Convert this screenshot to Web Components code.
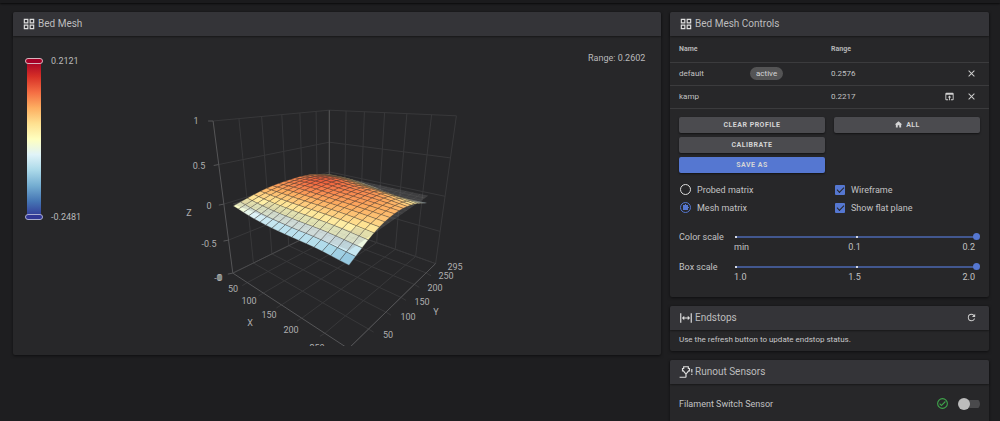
<!DOCTYPE html>
<html lang="en">
<head>
<meta charset="utf-8">
<meta name="viewport" content="width=device-width, initial-scale=1">
<title>Bed Mesh</title>
<style>
  html { background: #1e1e20; }
  body { margin: 0; background: #1e1e20; color: #c2c2c3; font-family: Roboto, "Liberation Sans", sans-serif; font-size: 9px; line-height: 12px; overflow: hidden; }
</style>
</head>
<body>
<tuning-page></tuning-page>
<script>
const ICONS = {
  grid: 'M3 3h8v8H3zM5 5v4h4V5zM13 3h8v8h-8zM15 5v4h4V5zM3 13h8v8H3zM5 15v4h4v-4zM13 13h8v8h-8zM15 15v4h4v-4z',
  expand: 'M9 11H15V8L19 12L15 16V13H9V16L5 12L9 8V11M2 20V4H4V20H2M20 20V4H22V20H20Z',
  nozzle: 'M7 2H17V5H19V11H17L13 16V20C13 21.1 12.1 22 11 22H1V20H11V16L7 11H5V5H7ZM9 4V7H7V9H8L12 14L16 9H17V7H15V4ZM21 7H23V13H21ZM21 15H23V17H21Z',
  refresh: 'M17.65 6.35C16.2 4.9 14.21 4 12 4A8 8 0 0 0 4 12A8 8 0 0 0 12 20C15.73 20 18.84 17.45 19.73 14H17.65C16.83 16.33 14.61 18 12 18A6 6 0 0 1 6 12A6 6 0 0 1 12 6C13.66 6 15.14 6.69 16.22 7.78L13 11H20V4Z',
  close: 'M19 6.41L17.59 5L12 10.59L6.41 5L5 6.41L10.59 12L5 17.59L6.41 19L12 13.41L17.59 19L19 17.59L13.41 12Z',
  load: 'M12 10L8 14H11V20H13V14H16ZM19 4H5C3.89 4 3 4.9 3 6V18A2 2 0 0 0 5 20H9V18H5V8H19V18H15V20H19A2 2 0 0 0 21 18V6A2 2 0 0 0 19 4Z',
  home: 'M10 20V14H14V20H19V12H22L12 3L2 12H5V20Z',
  ok: 'M12 2A10 10 0 1 0 22 12A10 10 0 0 0 12 2ZM12 20A8 8 0 1 1 20 12A8 8 0 0 1 12 20ZM16.6 7.6L10 14.2L7.4 11.6L6 13L10 17L18 9Z'
};

class Base extends HTMLElement {
  constructor() { super(); this.attachShadow({ mode: 'open' }); }
  connectedCallback() {
    this.shadowRoot.innerHTML = '<style>*{box-sizing:border-box}' + this.css() + '</style>' + this.html();
  }
  css() { return ''; }
  html() { return ''; }
}

customElements.define('md-icon', class extends Base {
  css() { return ':host{display:inline-flex;flex:none;width:14px;height:14px}svg{width:100%;height:100%;fill:currentColor}'; }
  html() { return `<svg viewBox="0 0 24 24" aria-hidden="true"><path fill-rule="evenodd" d="${ICONS[this.getAttribute('name')]}"/></svg>`; }
});

customElements.define('panel-card', class extends Base {
  css() { return `
    :host{display:block;background:#272729;border-radius:2px;box-shadow:0 1px 3px #0008}
    header{display:flex;align-items:center;gap:2px;height:24px;padding:0 9px;background:#343438;border-radius:2px 2px 0 0;box-shadow:0 1px 2px #0006}
    md-icon{color:#dedede}
    h2{margin:0;flex:1;font-size:10px;line-height:16px;font-weight:400;color:#bdbdbe}`; }
  html() { return `<header><md-icon name="${this.getAttribute('icon')}"></md-icon><h2>${this.getAttribute('heading')}</h2><slot name="action"></slot></header><slot></slot>`; }
});

customElements.define('icon-button', class extends Base {
  css() { return `:host{display:inline-flex}button{display:flex;align-items:center;justify-content:center;width:18px;height:18px;margin:0;padding:0;border:0;background:none;color:#d0d0d0}md-icon{width:11px;height:11px}`; }
  html() { return `<button type="button" aria-label="${this.getAttribute('label')}"><md-icon name="${this.getAttribute('name')}"></md-icon></button>`; }
});

customElements.define('flat-button', class extends Base {
  css() { return `
    :host{display:block}
    button{display:flex;align-items:center;justify-content:center;gap:3px;width:100%;height:16px;margin:0;padding:0;border:0;border-radius:2px;background:#4b4b4f;color:#d4d4d5;font:700 7px/16px Roboto,sans-serif;letter-spacing:.07em;text-transform:uppercase;box-shadow:0 1px 2px #0008}
    :host([primary]) button{background:#5577d1}`; }
  html() { return '<button type="button"><slot></slot></button>'; }
});

customElements.define('choice-input', class extends Base {
  css() { return `
    :host{display:block}
    label{display:flex;align-items:center;gap:6px;height:18px;padding-left:1px;font-size:9px;line-height:18px;color:#c2c2c3}
    input{appearance:none;flex:none;margin:0}
    input[type=radio]{width:11px;height:11px;border:1px solid #dedede;border-radius:50%}
    input[type=radio]:checked{border-color:#5577d1;background:radial-gradient(circle,#5577d1 0 3px,#0000 3px)}
    input[type=checkbox]{width:10px;height:10px;border-radius:1px;display:grid;place-items:center;background:#5577d1}
    input[type=checkbox]::after{content:"";width:6px;height:3px;margin-top:-2px;border:solid #242426;border-width:0 0 1px 1px;rotate:-45deg}`; }
  html() { return `<label><input type="${this.getAttribute('type')}"${this.hasAttribute('checked') ? ' checked' : ''}><span><slot></slot></span></label>`; }
});

customElements.define('tick-slider', class extends Base {
  css() { return `
    :host{display:grid;grid-template-columns:54px minmax(0,1fr);height:30px;align-content:start}
    label{line-height:12px}
    input{appearance:none;display:block;width:100%;height:12px;margin:0;background:
      linear-gradient(#d5d9e6,#d5d9e6) 2px 50%/2px 2px no-repeat,
      linear-gradient(#d5d9e6,#d5d9e6) 50% 50%/2px 2px no-repeat,
      linear-gradient(#42578f,#42578f) 50% 50%/calc(100% - 6px) 2px no-repeat}
    input::-webkit-slider-thumb{appearance:none;width:7px;height:7px;border-radius:50%;background:#5577d1}
    div{grid-column:2;display:grid;grid-template-columns:1fr 1fr 1fr;padding:0 5px 0 1px;line-height:10px;margin-top:-1px}
    span:nth-child(2){text-align:center}span:nth-child(3){text-align:right}`; }
  html() {
    const t = this.getAttribute('ticks').split(',').map(s => `<span>${s}</span>`).join('');
    return `<label for="r">${this.getAttribute('label')}</label><input id="r" type="range" min="0" max="2" value="2"><div>${t}</div>`;
  }
});

customElements.define('toggle-switch', class extends Base {
  css() { return `
    :host{display:inline-flex}
    input{appearance:none;position:relative;width:22px;height:12px;margin:0;background:linear-gradient(#4a4a4c,#4a4a4c) 100% 50%/20px 8px no-repeat;border-radius:6px}
    input::after{content:"";position:absolute;left:0;top:0;width:12px;height:12px;border-radius:50%;background:#bcbcbc}`; }
  html() { return `<input type="checkbox" role="switch" aria-label="${this.getAttribute('label')}">`; }
});

customElements.define('profile-table', class extends Base {
  css() { return `
    :host{display:block}
    table{width:100%;table-layout:fixed;border-collapse:collapse;font-size:8px;line-height:12px}
    th,td{padding:0;text-align:left;border-bottom:1px solid #3b3b3d;height:23px}
    th{height:26px;font-size:7px;font-weight:700;color:#b5b5b6}
    th:first-child,td:first-child{padding-left:9px}
    .name{width:80px}.state{width:81px}.range{width:80px}
    .chip{display:inline-block;padding:0 6px;border-radius:7px;background:#545455;line-height:13px;font-size:8px;color:#d5d5d5}
    .act{display:flex;justify-content:flex-end;gap:4px;padding-right:9px}`; }
  html() { return `
    <table>
      <colgroup><col class="name"><col class="state"><col class="range"><col></colgroup>
      <thead><tr><th colspan="2">Name</th><th>Range</th><th></th></tr></thead>
      <tbody>
        <tr><td>default</td><td><span class="chip">active</span></td><td>0.2576</td><td><div class="act"><icon-button name="close" label="Remove default"></icon-button></div></td></tr>
        <tr><td>kamp</td><td></td><td>0.2217</td><td><div class="act"><icon-button name="load" label="Load kamp"></icon-button><icon-button name="close" label="Remove kamp"></icon-button></div></td></tr>
      </tbody>
    </table>`; }
});

/* 3D surface: u runs from the back wall to the front, v from left to right, t from z=-1 to z=1 */
customElements.define('mesh-chart', class extends Base {
  css() { return `
    :host{display:block}
    svg{display:block;width:100%;height:auto}
    text{font:9px Roboto,sans-serif;fill:#aeaeaf;text-anchor:middle}
    .l{text-anchor:start;fill:#b9b9ba}`; }
  project(u, v, t) {
    const w = 1 - 0.249 * u - 0.223 * v - 0.127 * t;
    const x = (-72.5 * u + 82.6 * v) / w, y = (35.5 * u + 29.4 * v - 100.9 * t) / w;
    return [329.3 + x, 225.8 + y, w];
  }
  colour(z) {
    const map = ['313695', '4575b4', '74add1', 'abd9e9', 'e0f3f8', 'ffffbf', 'fee090', 'fdae61', 'f46d43', 'd73027', 'a50026'];
    const p = Math.max(0, Math.min(9.999, (z + 0.2481) / 0.4602 * 10)), i = Math.floor(p), f = p - i;
    const c = (k, o) => parseInt(map[k].slice(o, o + 2), 16);
    return 'rgb(' + [0, 2, 4].map(o => Math.round(c(i, o) * (1 - f) + c(i + 1, o) * f)).join() + ')';
  }
  height(x, y) {
    const rows = [
      [-.03, -.09, -.115, -.12, -.15],
      [.06, .045, .04, .035, .01],
      [.095, .115, .10, .085, .065],
      [.085, .12, .095, .07, .02],
      [.0, .0, -.04, -.10, -.10]];
    const spline = (p, s) => {
      const q = s * 4, i = Math.min(3, Math.floor(q)), f = q - i;
      const b = p[i], c = p[i + 1], a = i ? p[i - 1] : 2 * b - c, d = i < 3 ? p[i + 2] : 2 * c - b;
      return b + .5 * f * (c - a + f * (2 * a - 5 * b + 4 * c - d + f * (3 * (b - c) + d - a)));
    };
    return spline(rows.map(r => spline(r, x)), y);
  }
  html() {
    const P = (u, v, t) => this.project(u, v, t);
    const line = (a, b, c) => `<path d="M${a[0].toFixed(1)} ${a[1].toFixed(1)}L${b[0].toFixed(1)} ${b[1].toFixed(1)}" stroke="${c}"/>`;
    const soft = '#38383a', hard = '#555557';
    let grid = '';
    for (const m of [50, 100, 150, 200, 250, 295]) {
      const v = m / 295, u = 1 - v;
      grid += line(P(0, v, 0), P(0, v, 1), soft) + line(P(0, v, 0), P(1, v, 0), soft);
      grid += line(P(u, 0, 0), P(u, 0, 1), soft) + line(P(u, 0, 0), P(u, 1, 0), soft);
      const a = P(1, v, 0), b = P(u, 1, 0);
      if (m < 295) grid += line(a, [a[0] - 5, a[1] + 3], soft) + line(b, [b[0] + 5, b[1] + 3], soft);
    }
    for (const t of [0, .25, .5, .75, 1]) {
      grid += line(P(0, 0, t), P(1, 0, t), soft) + line(P(0, 0, t), P(0, 1, t), soft);
      const a = P(1, 0, t);
      grid += line(a, [a[0] - 5, a[1] + (t < 1 ? 1 : 0)], hard);
    }
    grid += line(P(0, 0, 0), P(0, 0, 1), hard) + line(P(1, 0, 0), P(1, 0, 1), hard) + line(P(1, 0, 0), P(1, 1, 0), hard) + line(P(1, 1, 0), P(0, 1, 0), hard)
      + line(P(1, 0, 0), P(0, 0, 0), '#4a4a4c');

    const n = 17, cells = [];
    const at = (i, j, flat) => {
      const x = i / n, y = j / n, z = flat ? 0 : this.height(x, y);
      return P(.96 - .9 * y, .04 + (.92 - .05 * y) * x, (z + 1) / 2);
    };
    const quad = (i, j, flat) => 'M' + [[i, j], [i + 1, j], [i + 1, j + 1], [i, j + 1]].map(([a, b]) => at(a, b, flat).slice(0, 2).map(k => k.toFixed(2)).join(' ')).join('L') + 'Z';
    for (let i = 0; i < n; i++) for (let j = 0; j < n; j++) {
      const z = this.height((i + .5) / n, (j + .5) / n);
      const s = `<path d="${quad(i, j)}" fill="${this.colour(z)}" stroke="#35302c" stroke-opacity=".5" stroke-width=".6"/>`;
      const f = `<path d="${quad(i, j, true)}" fill="#8c8c8c" fill-opacity=".24" stroke="#9a9a9a" stroke-opacity=".16" stroke-width=".4"/>`;
      cells.push([at(i + .5, j + .5, true)[2], z < 0 ? s + f : f + s]);
    }
    cells.sort((a, b) => b[0] - a[0]);

    const labels = [[196, 121, '1'], [199, 166, '0.5'], [209, 206, '0'], [209, 244, '-0.5'], [189, 213, 'Z'],
      [218, 278, '-1'], [220, 278, '0'], [219, 278, '0'],
      [233, 289, '50'], [249, 301, '100'], [269, 315, '150'], [291, 330, '200'], [317, 348, '250'], [250, 323, 'X'],
      [455, 267, '295'], [446, 276, '250'], [435, 288, '200'], [422, 302, '150'], [408, 317, '100'], [388, 335, '50'], [436, 312, 'Y']]
      .map(([x, y, s]) => `<text x="${x}" y="${y + 3}">${s}</text>`).join('');
    const stops = ['a50026', 'd73027', 'f46d43', 'fdae61', 'fee090', 'ffffbf', 'e0f3f8', 'abd9e9', '74add1', '4575b4', '313695']
      .map((c, i) => `<stop offset="${i * 10}%" stop-color="#${c}"/>`).join('');
    return `<svg viewBox="13 36 648 310" role="img" aria-label="Bed mesh surface">
      <defs><linearGradient id="scale" x2="0" y2="1">${stops}</linearGradient></defs>
      <g fill="none">${grid}</g><g stroke-linejoin="round">${cells.map(c => c[1]).join('')}</g>${labels}
      <rect x="27" y="61" width="14" height="156" fill="url(#scale)"/>
      <rect x="25.500" y="58.500" width="17" height="5" rx="2.500" fill="#a50026" stroke="#d6b4bd"/>
      <rect x="25.500" y="214.500" width="17" height="5" rx="2.500" fill="#313695" stroke="#a9abd0"/>
      <text class="l" x="51" y="64">0.2121</text><text class="l" x="51" y="220">-0.2481</text>
      <text class="l" x="588" y="61">Range: 0.2602</text>
    </svg>`;
  }
});

customElements.define('tuning-page', class extends Base {
  css() { return `
    :host{display:block}
    .bar{height:3px;background:#1b1b1d;box-shadow:0 1px 2px #000a}
    main{display:grid;grid-template-columns:minmax(0,1fr) 319px;gap:9px;align-items:start;padding:9px 11px 0 13px}
    aside{display:grid;gap:9px}
    .chart{padding-bottom:9px}
    .body{padding:8px 9px 0}
    .buttons,.choices{display:grid;grid-template-columns:1fr 1fr;column-gap:9px;align-items:start}
    .buttons>div{display:grid;gap:4px}
    .choices{margin-top:8px}
    .sliders{margin-top:14px;padding-bottom:6px}
    flat-button md-icon{width:9px;height:9px}
    p{margin:0;padding:4px 9px 5px;font-size:8px;line-height:12px;color:#c8c8c9}
    .sensor{display:flex;align-items:center;gap:9px;height:40px;padding:0 9px}
    .sensor span{flex:1}
    .sensor md-icon{width:13px;height:13px;color:#3fa64b}`; }
  html() { return `
    <div class="bar"></div>
    <main>
      <panel-card icon="grid" heading="Bed Mesh"><div class="chart"><mesh-chart></mesh-chart></div></panel-card>
      <aside>
        <panel-card icon="grid" heading="Bed Mesh Controls">
          <profile-table></profile-table>
          <div class="body">
            <div class="buttons">
              <div><flat-button>Clear profile</flat-button><flat-button>Calibrate</flat-button><flat-button primary>Save as</flat-button></div>
              <flat-button><md-icon name="home"></md-icon>All</flat-button>
            </div>
            <div class="choices">
              <choice-input type="radio">Probed matrix</choice-input><choice-input type="checkbox" checked>Wireframe</choice-input>
              <choice-input type="radio" checked>Mesh matrix</choice-input><choice-input type="checkbox" checked>Show flat plane</choice-input>
            </div>
            <div class="sliders">
              <tick-slider label="Color scale" ticks="min,0.1,0.2"></tick-slider>
              <tick-slider label="Box scale" ticks="1.0,1.5,2.0"></tick-slider>
            </div>
          </div>
        </panel-card>
        <panel-card icon="expand" heading="Endstops">
          <icon-button slot="action" name="refresh" label="Refresh"></icon-button>
          <p>Use the refresh button to update endstop status.</p>
        </panel-card>
        <panel-card icon="nozzle" heading="Runout Sensors">
          <div class="sensor"><span>Filament Switch Sensor</span><md-icon name="ok"></md-icon><toggle-switch label="Filament Switch Sensor"></toggle-switch></div>
        </panel-card>
      </aside>
    </main>`; }
});
</script>
</body>
</html>
